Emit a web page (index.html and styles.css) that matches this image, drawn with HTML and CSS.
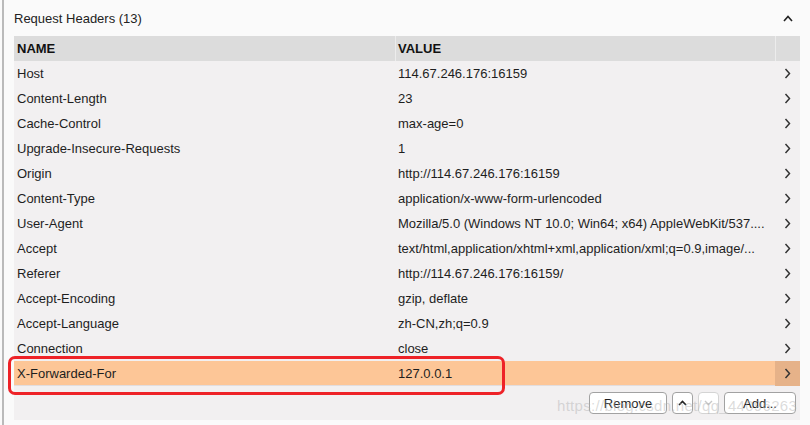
FILE: index.html
```html
<!DOCTYPE html>
<html lang="en">
<head>
    <meta charset="UTF-8">
    <meta name="viewport" content="width=device-width, initial-scale=1.0">
    <title>Request Headers</title>
    <link rel="stylesheet" href="styles.css">
</head>
<body>
    <div class="frame">
        <div class="section-head">
            <span class="section-title">Request Headers (13)</span>
            <svg class="collapse-icon" width="10" height="7" viewBox="0 0 10 7">
                <polyline points="1,6 5,1.5 9,6" fill="none" stroke="#222" stroke-width="1.6"/>
            </svg>
        </div>

        <div class="headers-panel">
            <div class="headers-table">
                <div class="row head">
                    <div class="cell">NAME</div>
                    <div class="cell">VALUE</div>
                    <div class="cell"></div>
                </div>
                <div class="row"><div class="cell">Host</div><div class="cell">114.67.246.176:16159</div><div class="cell more"><svg width="7" height="11" viewBox="0 0 7 11"><polyline points="1.5,1 5.5,5.5 1.5,10" fill="none" stroke="#333" stroke-width="1.5"/></svg></div></div>
                <div class="row"><div class="cell">Content-Length</div><div class="cell">23</div><div class="cell more"><svg width="7" height="11" viewBox="0 0 7 11"><polyline points="1.5,1 5.5,5.5 1.5,10" fill="none" stroke="#333" stroke-width="1.5"/></svg></div></div>
                <div class="row"><div class="cell">Cache-Control</div><div class="cell">max-age=0</div><div class="cell more"><svg width="7" height="11" viewBox="0 0 7 11"><polyline points="1.5,1 5.5,5.5 1.5,10" fill="none" stroke="#333" stroke-width="1.5"/></svg></div></div>
                <div class="row"><div class="cell">Upgrade-Insecure-Requests</div><div class="cell">1</div><div class="cell more"><svg width="7" height="11" viewBox="0 0 7 11"><polyline points="1.5,1 5.5,5.5 1.5,10" fill="none" stroke="#333" stroke-width="1.5"/></svg></div></div>
                <div class="row"><div class="cell">Origin</div><div class="cell">http://114.67.246.176:16159</div><div class="cell more"><svg width="7" height="11" viewBox="0 0 7 11"><polyline points="1.5,1 5.5,5.5 1.5,10" fill="none" stroke="#333" stroke-width="1.5"/></svg></div></div>
                <div class="row"><div class="cell">Content-Type</div><div class="cell">application/x-www-form-urlencoded</div><div class="cell more"><svg width="7" height="11" viewBox="0 0 7 11"><polyline points="1.5,1 5.5,5.5 1.5,10" fill="none" stroke="#333" stroke-width="1.5"/></svg></div></div>
                <div class="row"><div class="cell">User-Agent</div><div class="cell">Mozilla/5.0 (Windows NT 10.0; Win64; x64) AppleWebKit/537....</div><div class="cell more"><svg width="7" height="11" viewBox="0 0 7 11"><polyline points="1.5,1 5.5,5.5 1.5,10" fill="none" stroke="#333" stroke-width="1.5"/></svg></div></div>
                <div class="row"><div class="cell">Accept</div><div class="cell">text/html,application/xhtml+xml,application/xml;q=0.9,image/...</div><div class="cell more"><svg width="7" height="11" viewBox="0 0 7 11"><polyline points="1.5,1 5.5,5.5 1.5,10" fill="none" stroke="#333" stroke-width="1.5"/></svg></div></div>
                <div class="row"><div class="cell">Referer</div><div class="cell">http://114.67.246.176:16159/</div><div class="cell more"><svg width="7" height="11" viewBox="0 0 7 11"><polyline points="1.5,1 5.5,5.5 1.5,10" fill="none" stroke="#333" stroke-width="1.5"/></svg></div></div>
                <div class="row"><div class="cell">Accept-Encoding</div><div class="cell">gzip, deflate</div><div class="cell more"><svg width="7" height="11" viewBox="0 0 7 11"><polyline points="1.5,1 5.5,5.5 1.5,10" fill="none" stroke="#333" stroke-width="1.5"/></svg></div></div>
                <div class="row"><div class="cell">Accept-Language</div><div class="cell">zh-CN,zh;q=0.9</div><div class="cell more"><svg width="7" height="11" viewBox="0 0 7 11"><polyline points="1.5,1 5.5,5.5 1.5,10" fill="none" stroke="#333" stroke-width="1.5"/></svg></div></div>
                <div class="row"><div class="cell">Connection</div><div class="cell">close</div><div class="cell more"><svg width="7" height="11" viewBox="0 0 7 11"><polyline points="1.5,1 5.5,5.5 1.5,10" fill="none" stroke="#333" stroke-width="1.5"/></svg></div></div>
                <div class="row selected"><div class="cell">X-Forwarded-For</div><div class="cell">127.0.0.1</div><div class="cell more"><svg width="7" height="11" viewBox="0 0 7 11"><polyline points="1.5,1 5.5,5.5 1.5,10" fill="none" stroke="#333" stroke-width="1.5"/></svg></div></div>
            </div>

            <div class="actions">
                <button class="btn btn-remove">Remove</button>
                <button class="btn btn-icon">
                    <svg width="9" height="6" viewBox="0 0 9 6"><polyline points="1,5 4.5,1.5 8,5" fill="none" stroke="#222" stroke-width="1.6"/></svg>
                </button>
                <button class="btn btn-icon" disabled>
                    <svg width="9" height="6" viewBox="0 0 9 6"><polyline points="1,1 4.5,4.5 8,1" fill="none" stroke="#c8c8c8" stroke-width="1.4"/></svg>
                </button>
                <button class="btn btn-add">Add...</button>
            </div>

            <div class="watermark">https://blog.csdn.net/qq_44096263</div>
        </div>

        <!-- red marker drawn over the selected row -->
        <div class="highlight-box"></div>
    </div>
</body>
</html>
```

FILE: styles.css
```css
body {
    margin: 0;
    font-family: 'Liberation Sans', Arial, sans-serif;
    font-size: 13px;
    color: #1e1e1e;
    background-color: #fafafa;
}

.frame {
    position: relative;
    width: 786px;
    height: 425px;
    margin-left: 2px;
    padding-left: 10px;
    border-left: 2px solid #bababa;
}

.section-head {
    height: 36px;
    display: flex;
    align-items: center;
    justify-content: space-between;
    padding-right: 7px;
}

.section-title {
    color: #222;
}

.headers-panel {
    position: relative;
    height: 384px;
    background-color: #f2f0f1;
}

.row {
    display: grid;
    grid-template-columns: 381px 380px 25px;
    height: 25px;
    align-items: center;
}

.row.head {
    background-color: #dcdcdc;
    font-weight: bold;
    color: #111;
}

.row.head .cell {
    height: 25px;
    line-height: 25px;
}

.row.head .cell + .cell {
    box-shadow: inset 1px 0 0 #ececec;
}

.cell {
    padding-left: 3px;
    white-space: nowrap;
    overflow: hidden;
    text-overflow: ellipsis;
}

.cell.more {
    height: 25px;
    padding-left: 0;
    display: flex;
    align-items: center;
    justify-content: center;
}

.row.selected {
    background-color: #fdc697;
    box-shadow: inset 0 -1px 0 #e2ddde;
}

.row.selected .more {
    background-color: #e6b289;
}

.actions {
    display: flex;
    justify-content: flex-end;
    gap: 5px;
    padding-top: 6px;
    padding-right: 4px;
}

.btn {
    height: 22px;
    padding: 0;
    background-color: #fff;
    border: 1px solid #a2a2a2;
    border-radius: 4px;
    font-family: 'Liberation Sans', Arial, sans-serif;
    font-size: 13px;
    color: #1e1e1e;
    display: flex;
    align-items: center;
    justify-content: center;
}

.btn:disabled {
    border-color: #d4d4d4;
}

.btn-remove {
    width: 78px;
}

.btn-icon {
    width: 21px;
}

.btn-add {
    width: 72px;
}

.watermark {
    position: absolute;
    left: 543px;
    top: 361px;
    font-size: 15px;
    letter-spacing: 0.3px;
    color: rgba(175, 175, 175, 0.45);
    pointer-events: none;
}

.highlight-box {
    position: absolute;
    left: 4px;
    top: 356px;
    width: 491px;
    height: 33px;
    border: 3px solid #ee2227;
    border-radius: 7px;
}
```
